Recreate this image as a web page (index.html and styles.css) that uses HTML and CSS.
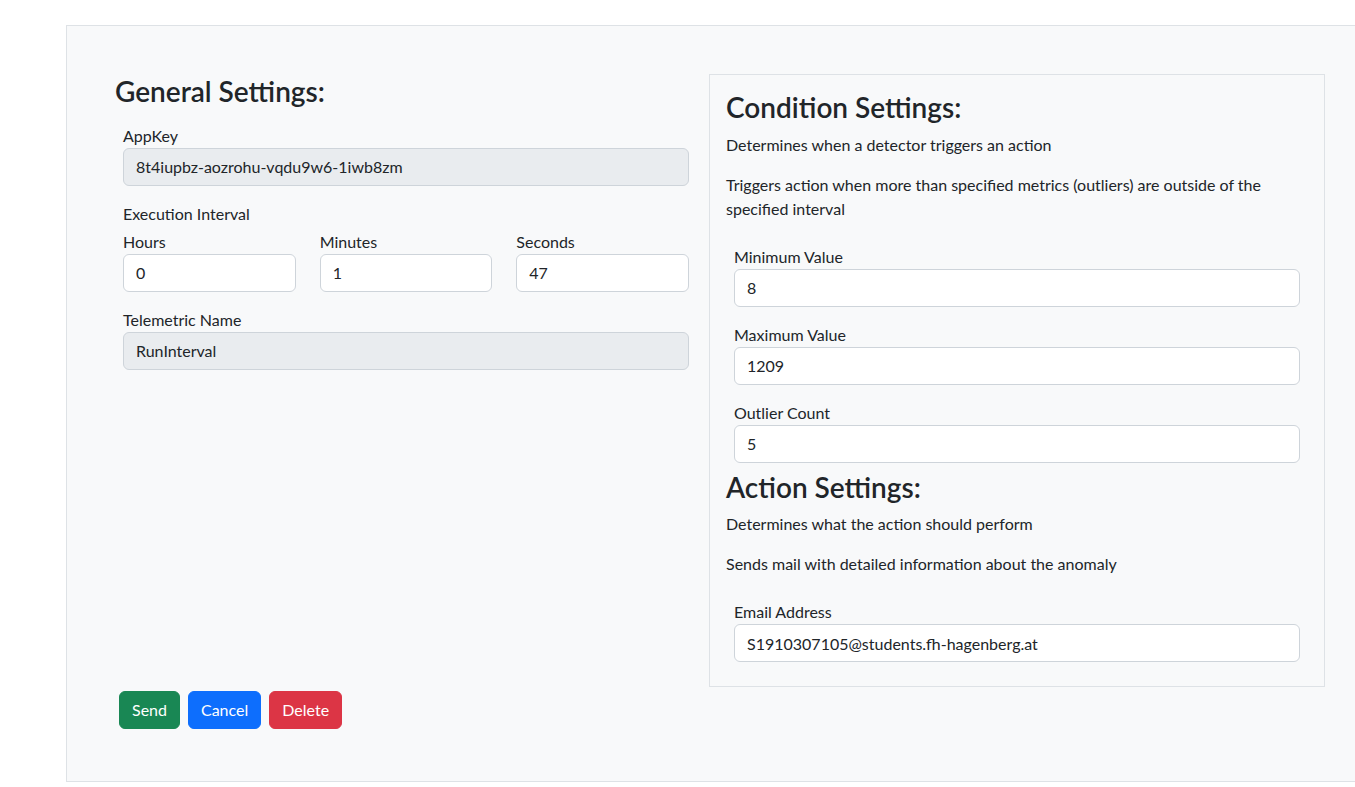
FILE: index.html
```html
<!DOCTYPE html>
<html lang="en">
<head>
<meta charset="utf-8">
<title>Detector Settings</title>
<link rel="stylesheet" href="styles.css">
</head>
<body>
<div class="page">
  <div class="settings">
    <div class="cols">
      <div class="general">
        <h3 class="title">General Settings:</h3>
        <div class="group">
          <label class="label">AppKey</label>
          <input class="field" type="text" value="8t4iupbz-aozrohu-vqdu9w6-1iwb8zm" disabled>
        </div>
        <div class="group">
          <div class="label">Execution Interval</div>
          <div class="triple">
            <div class="sub">
              <label class="label">Hours</label>
              <input class="field" type="text" value="0">
            </div>
            <div class="sub">
              <label class="label">Minutes</label>
              <input class="field" type="text" value="1">
            </div>
            <div class="sub">
              <label class="label">Seconds</label>
              <input class="field" type="text" value="47">
            </div>
          </div>
        </div>
        <div class="group">
          <label class="label">Telemetric Name</label>
          <input class="field" type="text" value="RunInterval" disabled>
        </div>
      </div>
      <div class="card">
        <h3 class="title">Condition Settings:</h3>
        <p class="text">Determines when a detector triggers an action</p>
        <p class="text">Triggers action when more than specified metrics (outliers) are outside of the<br>specified interval</p>
        <div class="group">
          <label class="label">Minimum Value</label>
          <input class="field" type="text" value="8">
        </div>
        <div class="group">
          <label class="label">Maximum Value</label>
          <input class="field" type="text" value="1209">
        </div>
        <div class="group">
          <label class="label">Outlier Count</label>
          <input class="field" type="text" value="5">
        </div>
        <h3 class="title">Action Settings:</h3>
        <p class="text">Determines what the action should perform</p>
        <p class="text">Sends mail with detailed information about the anomaly</p>
        <div class="group">
          <label class="label">Email Address</label>
          <input class="field" type="text" value="S1910307105@students.fh-hagenberg.at">
        </div>
      </div>
    </div>
    <div class="actions">
      <button class="btn btn-send" type="button">Send</button>
      <button class="btn btn-cancel" type="button">Cancel</button>
      <button class="btn btn-delete" type="button">Delete</button>
    </div>
  </div>
</div>
</body>
</html>
```

FILE: styles.css
```css
html, body {
  margin: 0;
  padding: 0;
  background: #ffffff;
  overflow: hidden;
}
body {
  font-family: "Segoe UI", Lato, "Liberation Sans", sans-serif;
  font-size: 16px;
  line-height: 1.5;
  color: #212529;
}
.page {
  padding: 25px 0 0 66px;
}
.settings {
  box-sizing: border-box;
  width: 1308px;
  background: #f8f9fa;
  border: 1px solid #dee2e6;
  padding: 48px;
}
.cols {
  display: grid;
  grid-template-columns: 582px 616px;
  column-gap: 12px;
  align-items: start;
}
.title {
  margin: 0 0 8px 0;
  font-size: 28px;
  font-weight: 600;
  line-height: 1.2;
  color: #212529;
}
.general .title {
  padding-top: 1px;
  margin-bottom: 7px;
}
.group {
  padding: 8px;
}
.label {
  display: block;
  font-size: 16px;
  line-height: 24px;
}
.field {
  display: block;
  box-sizing: border-box;
  width: 100%;
  height: 38px;
  margin: 0;
  padding: 6px 12px;
  font: inherit;
  line-height: 24px;
  color: #212529;
  background: #ffffff;
  border: 1px solid #ced4da;
  border-radius: 6px;
}
.field:disabled {
  background: #e9ecef;
  color: #212529;
  opacity: 1;
}
.triple {
  display: grid;
  grid-template-columns: 1fr 1fr 1fr;
  column-gap: 24px;
  margin-top: 4px;
}
.card {
  box-sizing: border-box;
  border: 1px solid #dee2e6;
  background: #f8f9fa;
  padding: 16px;
}
.text {
  margin: 0 0 16px 0;
}
.actions {
  display: flex;
  gap: 8px;
  padding: 4px;
}
.btn {
  height: 38px;
  padding: 6px 12px;
  font: inherit;
  line-height: 24px;
  color: #ffffff;
  border: 1px solid transparent;
  border-radius: 6px;
  cursor: pointer;
}
.btn-send {
  background: #198754;
  border-color: #198754;
}
.btn-cancel {
  background: #0d6efd;
  border-color: #0d6efd;
}
.btn-delete {
  background: #dc3545;
  border-color: #dc3545;
}
```
